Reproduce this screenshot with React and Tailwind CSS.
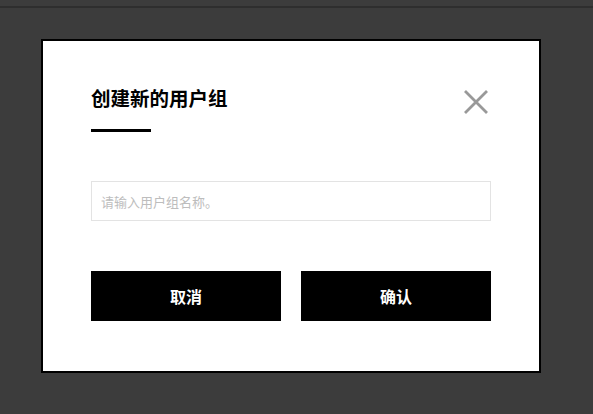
import React from 'react';

const font = { fontFamily: '"Noto Sans CJK SC", "Liberation Sans", sans-serif' };

const App = () => {
    return (
        <div className="min-h-[414px] w-[593px] bg-[#3c3c3c]" style={font}>
            <div className="h-[6px] bg-[#3c3c3c]" />
            <div className="h-[2px] bg-[#2e2e2e]" />
            <div className="pl-[41px] pt-[31px]">
                <div className="w-[500px] h-[334px] border-2 border-black bg-white pl-[48px] pr-[48px] pt-[44px]">
                    <div className="flex items-start justify-between">
                        <div>
                            <h2 className="text-[19.5px] leading-[26px] font-bold text-black">创建新的用户组</h2>
                            <div className="mt-[18px] h-[3px] w-[60px] bg-black" />
                        </div>
                        <button className="mt-[5px] mr-[3px] w-[24px] h-[24px] text-[#999999]">
                            <svg viewBox="0 0 24 24" width="24" height="24" fill="none" stroke="currentColor" strokeWidth="2.8">
                                <path d="M1 1 L23 23 M23 1 L1 23" />
                            </svg>
                        </button>
                    </div>
                    <input
                        type="text"
                        placeholder="请输入用户组名称。"
                        className="mt-[49px] block w-[400px] h-[40px] border border-[#e3e3e3] px-[9px] text-[13px] placeholder:text-[#bdbdbd] outline-none"
                    />
                    <div className="mt-[50px] flex gap-[20px]">
                        <button className="w-[190px] h-[50px] bg-black text-white text-[16px] font-bold">取消</button>
                        <button className="w-[190px] h-[50px] bg-black text-white text-[16px] font-bold">确认</button>
                    </div>
                </div>
            </div>
        </div>
    );
};

export default App;
